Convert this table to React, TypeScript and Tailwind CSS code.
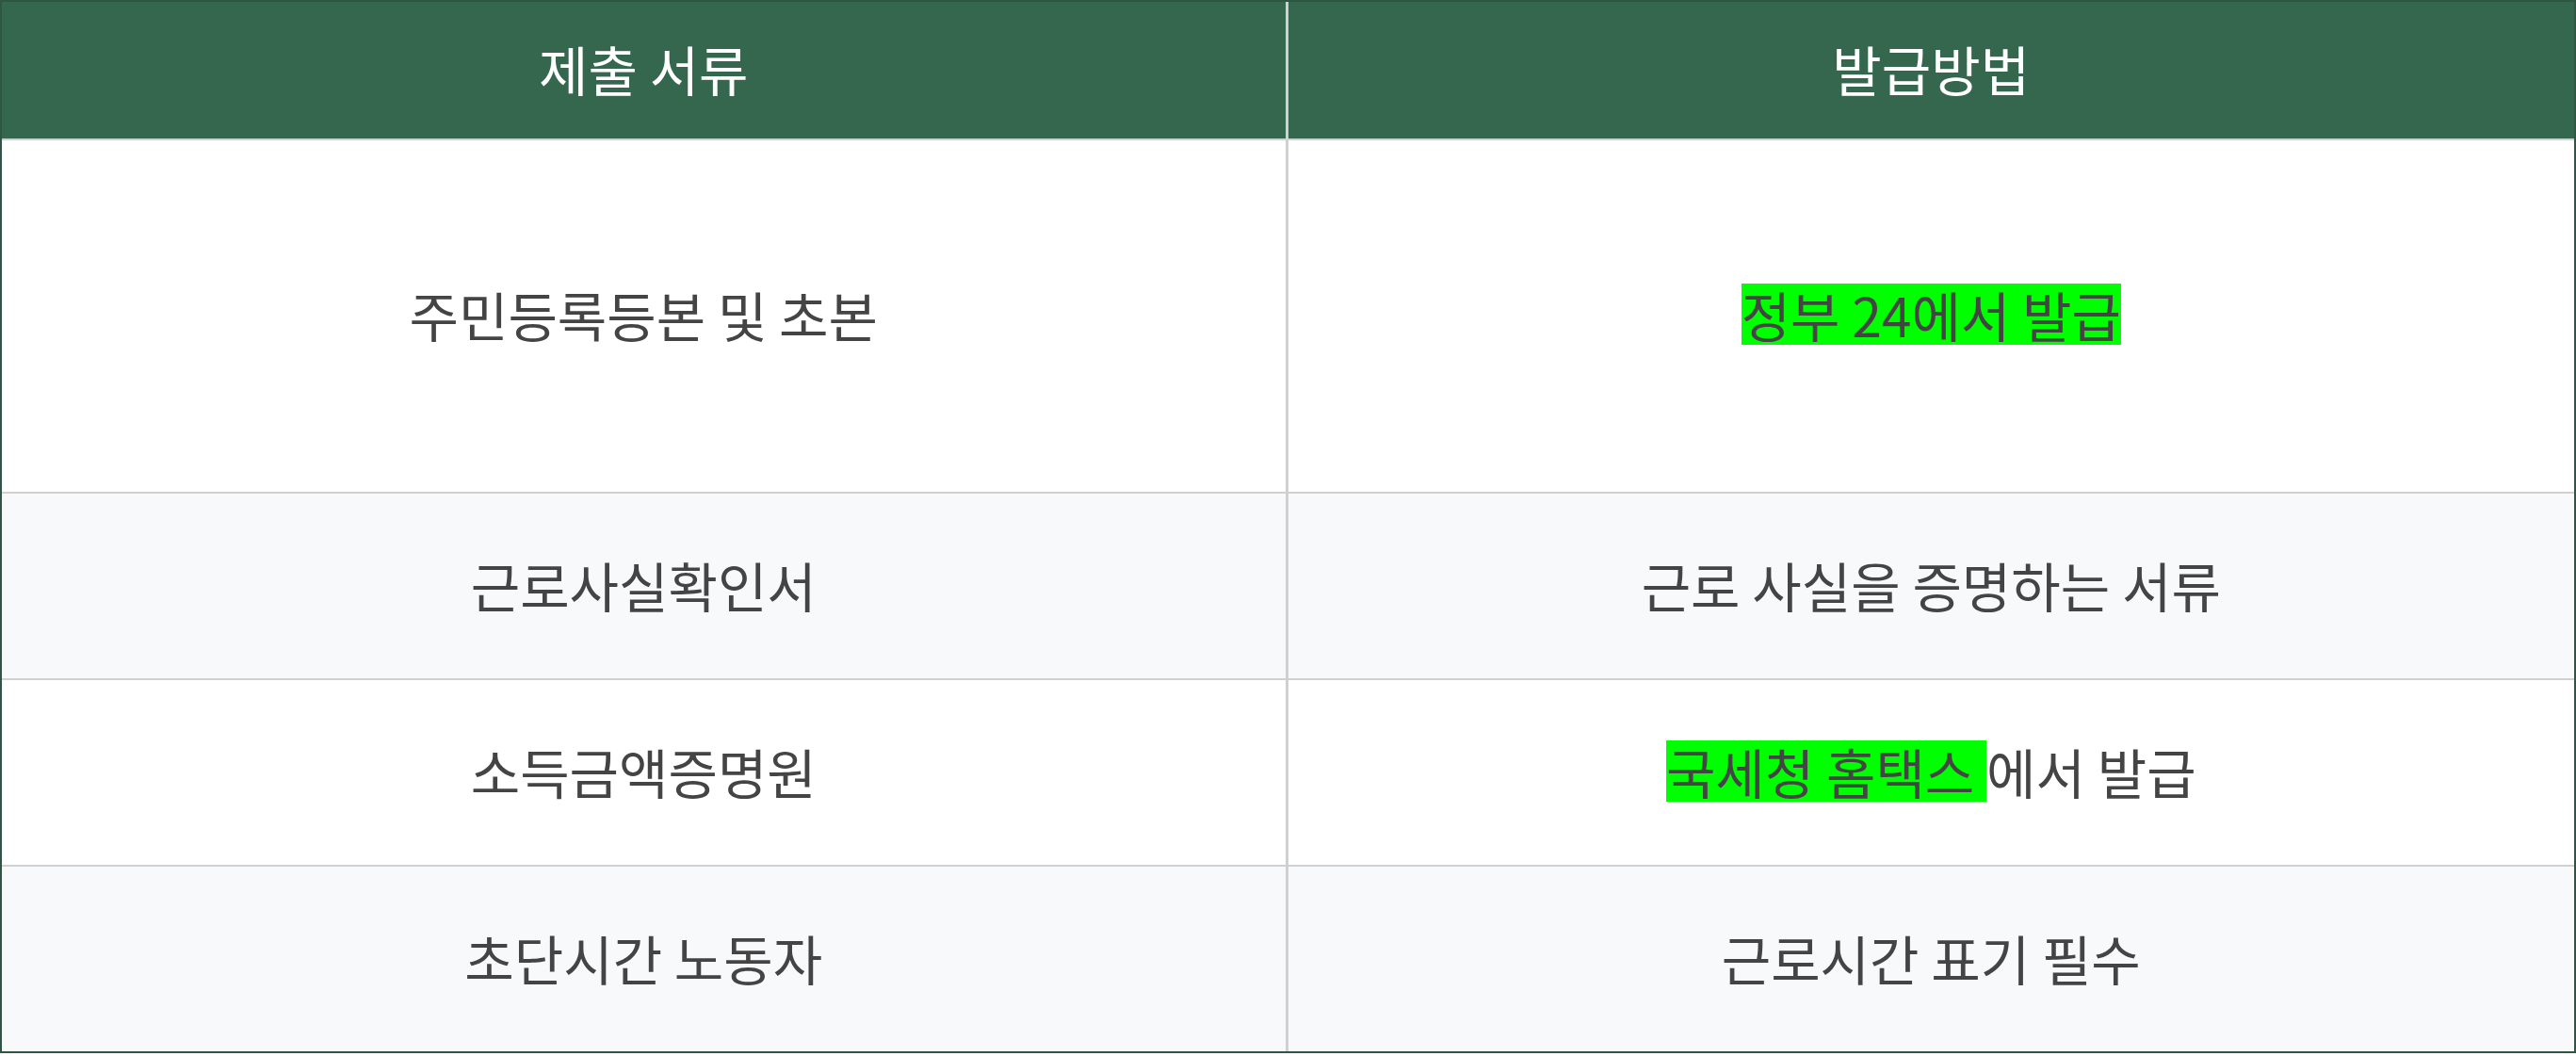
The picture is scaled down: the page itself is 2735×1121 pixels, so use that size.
const rows = [
  { doc: "주민등록등본 및 초본", how: <mark className="bg-[#00ff00] text-[#444444]">정부 24에서 발급</mark>, tall: true },
  { doc: "근로사실확인서", how: <>근로 사실을 증명하는 서류</> },
  {
    doc: "소득금액증명원",
    how: (
      <>
        <mark className="bg-[#00ff00] text-[#444444]">국세청 홈택스 </mark>에서 발급
      </>
    ),
  },
  { doc: "초단시간 노동자", how: <>근로시간 표기 필수</> },
];

function App() {
  return (
    <div className="w-[2735px] h-[1121px] bg-white font-['Noto_Sans_CJK_KR',sans-serif]">
      <div className="border-2 border-[#2f5544] h-[1118px] flex flex-col">
        <div className="grid grid-cols-2 h-[147px] bg-[#35674f] text-white text-[57px] leading-[65px] border-b-2 border-[#d0d0d0]">
          <div className="flex items-center justify-center border-r-[3px] border-[#cfcfcf] pb-1">제출 서류</div>
          <div className="flex items-center justify-center pb-1">발급방법</div>
        </div>
        {rows.map((r, i) => (
          <div
            key={i}
            className={
              "grid grid-cols-2 text-[57px] leading-[65px] text-[#444444] " +
              (i % 2 === 1 ? "bg-[#f8f9fa] " : "bg-white ") +
              (r.tall ? "h-[375px] " : "flex-1 ") +
              (i < rows.length - 1 ? "border-b-2 border-[#d0d0d0]" : "")
            }
          >
            <div className="flex items-center justify-center border-r-[3px] border-[#d0d0d0] pb-1">{r.doc}</div>
            <div className="flex items-center justify-center whitespace-pre pb-1">{r.how}</div>
          </div>
        ))}
      </div>
    </div>
  );
}

export default App;
